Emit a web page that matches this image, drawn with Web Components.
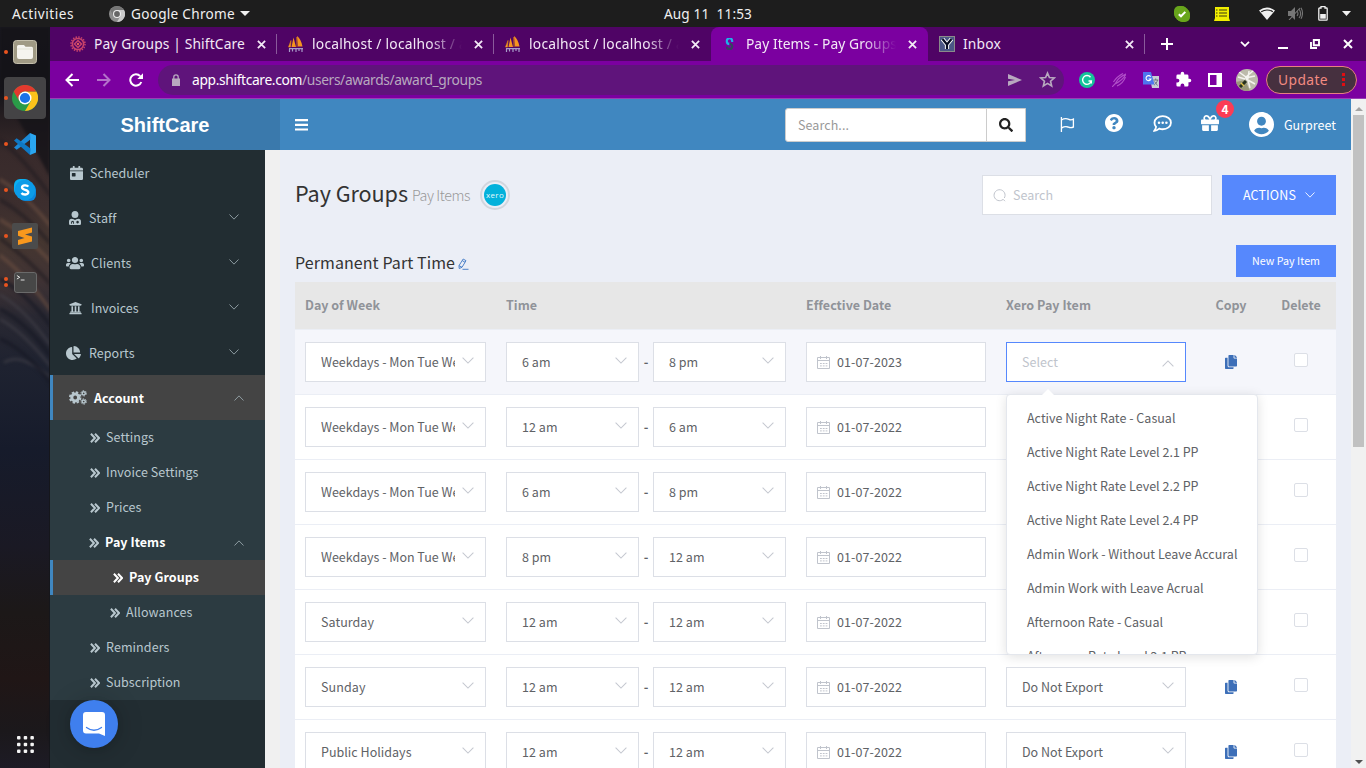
<!DOCTYPE html>
<html lang="en">
<head>
<meta charset="utf-8">
<title>Pay Items - Pay Groups</title>
<style>
html,body{margin:0;height:100%;overflow:hidden;background:#1d1d1d}
</style>
</head>
<body>
<desk-top></desk-top>
<script>
const RESET = '*{box-sizing:border-box}:host([hidden]){display:none}svg{display:block;flex:none}';
const UI = 'font-family:"Noto Sans",sans-serif;';
const PAGE = 'font-family:"Noto Sans CJK SC","Source Sans Pro",sans-serif;';

function define(name, css, html) {
  customElements.define(name, class extends HTMLElement {
    connectedCallback() {
      if (this.shadowRoot) return;
      const root = this.attachShadow({mode: 'open'});
      root.innerHTML = '<style>' + RESET + css + '</style>' + (typeof html === 'function' ? html(this) : html);
    }
  });
}

/* Text run whose tracking is adjusted so that it takes the width given by w. */
const runs = [];
customElements.define('fit-text', class extends HTMLElement {
  connectedCallback() {
    if (this.shadowRoot) return;
    this.attachShadow({mode: 'open'}).innerHTML =
      '<style>:host{display:inline-block;white-space:pre;flex:none}</style><slot></slot>';
    runs.push(this);
  }
  fit() {
    const w = +this.getAttribute('w'), n = this.textContent.length;
    if (!w) return;
    const nat = this.getBoundingClientRect().width;
    this.style.letterSpacing = ((w - nat) / n).toFixed(3) + 'px';
  }
});
const T = (s, w, cls = '') => `<fit-text w="${w}" class="${cls}">${s}</fit-text>`;

const ICONS = {
  search: ['0 0 512 512', '<path d="M505 442.7L405.3 343c-4.5-4.5-10.6-7-17-7H372c27.6-35.3 44-79.7 44-128C416 93.1 322.9 0 208 0S0 93.1 0 208s93.1 208 208 208c48.3 0 92.7-16.4 128-44v16.3c0 6.4 2.5 12.5 7 17l99.7 99.7c9.4 9.4 24.6 9.4 33.9 0l28.3-28.3c9.4-9.4 9.4-24.6.1-34zM208 336c-70.7 0-128-57.2-128-128 0-70.7 57.2-128 128-128 70.7 0 128 57.2 128 128 0 70.7-57.2 128-128 128z"/>'],
  copy: ['0 0 448 512', '<path d="M320 448v40c0 13.255-10.745 24-24 24H24c-13.255 0-24-10.745-24-24V120c0-13.255 10.745-24 24-24h72v296c0 30.879 25.121 56 56 56h168zm0-344V0H152c-13.255 0-24 10.745-24 24v368c0 13.255 10.745 24 24 24h272c13.255 0 24-10.745 24-24V128H344c-13.2 0-24-10.8-24-24zm120.971-31.029L375.029 7.029A24 24 0 0 0 358.059 0H352v96h96v-6.059a24 24 0 0 0-7.029-16.97z"/>'],
  calendar: ['0 0 448 512', '<path d="M0 464c0 26.5 21.5 48 48 48h352c26.5 0 48-21.5 48-48V192H0v272zm64-192c0-8.8 7.2-16 16-16h96c8.8 0 16 7.2 16 16v96c0 8.8-7.2 16-16 16H80c-8.8 0-16-7.2-16-16v-96zM400 64h-48V16c0-8.8-7.2-16-16-16h-32c-8.8 0-16 7.2-16 16v48H160V16c0-8.8-7.2-16-16-16h-32c-8.8 0-16 7.2-16 16v48H48C21.5 64 0 85.5 0 112v48h448v-48c0-26.5-21.5-48-48-48z"/>'],
  staff: ['0 0 14 16', '<circle cx="7" cy="4" r="4"/><path fill-rule="evenodd" d="M3.5 9h1.2L7 10.2 9.300 9h1.200A3.400 3.400 0 0 1 14 12.500v2q0 1.500-1.500 1.500h-11Q0 16 0 14.500v-2A3.400 3.400 0 0 1 3.500 9zM4 11.300a1.500 1.500 0 0 0-1.500 1.500v1.700h1v-1.400q0-.6.6-.6t.6.600v1.400h1v-1.700A1.500 1.500 0 0 0 4 11.300zM10 11.200a1.500 1.500 0 1 0 .01 0z"/>'],
  users: ['0 0 640 512', '<path d="M96 224c35.3 0 64-28.7 64-64s-28.7-64-64-64-64 28.7-64 64 28.7 64 64 64zm448 0c35.3 0 64-28.7 64-64s-28.7-64-64-64-64 28.7-64 64 28.7 64 64 64zm32 32h-64c-17.6 0-33.5 7.1-45.1 18.6 40.3 22.1 68.9 62 75.1 109.4h66c17.7 0 32-14.3 32-32v-32c0-35.3-28.7-64-64-64zm-256 0c61.9 0 112-50.1 112-112S381.9 32 320 32 208 82.1 208 144s50.1 112 112 112zm76.8 32h-8.3c-20.8 10-43.9 16-68.5 16s-47.6-6-68.5-16h-8.3C179.6 288 128 339.6 128 403.2V432c0 26.5 21.5 48 48 48h288c26.5 0 48-21.5 48-48v-28.8c0-63.6-51.6-115.2-115.2-115.2zm-223.7-13.4C161.5 263.1 145.6 256 128 256H64c-35.3 0-64 28.7-64 64v32c0 17.7 14.3 32 32 32h65.9c6.3-47.4 34.9-87.3 75.2-109.4z"/>'],
  bank: ['0 0 512 512', '<path d="M496 128v16a8 8 0 0 1-8 8h-24v12c0 6.627-5.373 12-12 12H60c-6.627 0-12-5.373-12-12v-12H24a8 8 0 0 1-8-8v-16a8 8 0 0 1 4.941-7.392l232-88a7.996 7.996 0 0 1 6.118 0l232 88A8 8 0 0 1 496 128zm-24 304H40c-13.255 0-24 10.745-24 24v16a8 8 0 0 0 8 8h464a8 8 0 0 0 8-8v-16c0-13.255-10.745-24-24-24zM96 192v192H60c-6.627 0-12 5.373-12 12v20h416v-20c0-6.627-5.373-12-12-12h-36V192h-64v192h-64V192h-64v192h-64V192H96z"/>'],
  pie: ['0 0 544 512', '<path d="M527.79 288H290.5l158.03 158.03c6.04 6.04 15.98 6.53 22.19.68 38.7-36.46 65.32-85.61 73.13-140.86 1.34-9.46-6.51-17.85-16.06-17.85zm-15.83-64.8C503.72 103.74 408.26 8.28 288.8.04 279.68-.59 272 7.1 272 16.24V240h223.77c9.14 0 16.82-7.68 16.19-16.8zM224 288V50.71c0-9.55-8.39-17.4-17.84-16.06C86.99 51.49-4.1 155.6.14 280.37 4.5 408.51 114.83 513.59 243.03 511.98c50.4-.63 96.97-16.87 135.26-44.03 7.9-5.6 8.42-17.23 1.57-24.08L224 288z"/>'],
  cogs: ['0 0 18 15', '<g fill="none" stroke="currentColor"><circle cx="6.200" cy="7.500" r="3.400" stroke-width="3"/><circle cx="6.200" cy="7.500" r="5.300" stroke-width="1.800" stroke-dasharray="2.400 1.763"/><circle cx="14.700" cy="3.300" r="1.600" stroke-width="1.500"/><circle cx="14.700" cy="3.300" r="2.700" stroke-width="1" stroke-dasharray="1.500 1.327"/><circle cx="14.700" cy="11.500" r="1.600" stroke-width="1.500"/><circle cx="14.700" cy="11.500" r="2.700" stroke-width="1" stroke-dasharray="1.500 1.327"/></g>'],
  help: ['8 8 496 496', '<path d="M504 256c0 136.997-111.043 248-248 248S8 392.997 8 256C8 119.083 119.043 8 256 8s248 111.083 248 248zM262.655 90c-54.497 0-89.255 22.957-116.549 63.758-3.536 5.286-2.353 12.415 2.715 16.258l34.699 26.31c5.205 3.947 12.621 3.008 16.665-2.122 17.864-22.658 30.113-35.797 57.303-35.797 20.429 0 45.698 13.148 45.698 32.958 0 14.976-12.363 22.667-32.534 33.976C247.128 238.528 216 254.941 216 296v4c0 6.627 5.373 12 12 12h56c6.627 0 12-5.373 12-12v-1.333c0-28.462 83.186-29.647 83.186-106.667 0-58.002-60.165-102-116.531-102zM256 338c-25.365 0-46 20.635-46 46 0 25.364 20.635 46 46 46s46-20.636 46-46c0-25.365-20.635-46-46-46z"/>'],
  user: ['0 8 496 496', '<path d="M248 8C111 8 0 119 0 256s111 248 248 248 248-111 248-248S385 8 248 8zm0 96c48.6 0 88 39.4 88 88s-39.4 88-88 88-88-39.4-88-88 39.400-88 88-88zm0 344c-58.7 0-111.300-26.600-146.500-68.200 18.800-35.400 55.600-59.800 98.500-59.800 2.400 0 4.800.4 7.100 1.100 13 4.200 26.600 6.900 40.900 6.900 14.300 0 28-2.700 40.900-6.900 2.300-.7 4.700-1.100 7.100-1.100 42.900 0 79.700 24.400 98.500 59.800C359.300 421.400 306.700 448 248 448z"/>'],
  gift: ['0 32 512 448', '<path d="M32 448c0 17.7 14.300 32 32 32h160V320H32v128zm256 32h160c17.7 0 32-14.300 32-32V320H288v160zm192-320h-42.100c6.200-12.100 10.100-25.500 10.100-40 0-48.500-39.500-88-88-88-41.600 0-68.500 21.300-103 68.300-34.500-47-61.400-68.300-103-68.300-48.500 0-88 39.500-88 88 0 14.500 3.800 27.900 10.100 40H32c-17.700 0-32 14.300-32 32v80c0 8.800 7.200 16 16 16h480c8.800 0 16-7.200 16-16v-80c0-17.700-14.300-32-32-32zm-326.100 0c-22.100 0-40-17.900-40-40s17.900-40 40-40c19.900 0 34.600 3.300 86.100 80h-86.100zm206.100 0h-86.100c51.400-76.500 65.700-80 86.100-80 22.100 0 40 17.900 40 40s-17.900 40-40 40z"/>'],
  flag: ['0 0 16 15', '<g fill="none" stroke="currentColor" stroke-width="1.400"><path d="M1.500 0v15"/><path d="M1.500 3C5 1 7.500 1.500 9.500 2.400S13 2.800 14.300 2.200V10C11.500 11.200 10 10.500 8.500 10S4.500 9.500 1.500 11"/></g>'],
  chat: ['0 0 18 16', '<path d="M9.200 1C13.500 1 17 3.700 17 7.200s-3.500 6.200-7.800 6.200c-1.200 0-2.300-.2-3.300-.6C4.700 13.900 3 14.900 1.200 14.900 2 14 2.700 12.900 2.900 11.200 2 10.100 1.400 8.700 1.400 7.200 1.400 3.700 4.900 1 9.200 1z" fill="none" stroke="currentColor" stroke-width="1.700"/><circle cx="5.700" cy="7.200" r="1.200"/><circle cx="9.200" cy="7.200" r="1.200"/><circle cx="12.700" cy="7.200" r="1.200"/>'],
  bars: ['0 0 13 12', '<path d="M0 0h13v2.200H0zM0 4.700h13v2.200H0zM0 9.400h13v2.200H0z"/>'],
  dbl: ['0 0 10 10', '<path d="M.9.800l4 4.200-4 4.200M5 .8L9 5 5 9.200" fill="none" stroke="currentColor" stroke-width="2"/>'],
  down: ['0 0 12 7', '<path d="M.6.600L6 6 11.400.600" fill="none" stroke="currentColor" stroke-width="1.050"/>'],
  up: ['0 0 12 7', '<path d="M.6 6.400L6 1l5.400 5.400" fill="none" stroke="currentColor" stroke-width="1.050"/>'],
  date: ['0 0 13 13', '<g fill="none" stroke="currentColor" stroke-width="1"><path d="M.5 1.500h12v11H.5zM.5 4.500h12M3.500 0v3M9.500 0v3" /><path d="M3 7.500h8M3 9.900h8" stroke-dasharray="1.800 1"/></g>'],
  lens: ['0 0 13 13', '<path d="M10 10.500A5.500 5.500 0 1 1 11.300 9M10 10.200l2 2" fill="none" stroke="currentColor" stroke-width="1"/>'],
  edit: ['0 0 11 12', '<path d="M1 7.600L5.200 1 8 2.700 4 9.300 1.200 10.500zM4.300 2.600l2.700 1.700M1 7.600l3 1.700M4.500 11.300h6" fill="none" stroke="currentColor" stroke-width=".9"/>'],
  x: ['0 0 10 10', '<path d="M1 1l8 8M9 1L1 9" fill="none" stroke="currentColor" stroke-width="2"/>'],
  plus: ['0 0 12 12', '<path d="M6 0v12M0 6h12" fill="none" stroke="currentColor" stroke-width="2"/>'],
  chev: ['0 0 10 6', '<path d="M1 .8l4 4 4-4" fill="none" stroke="currentColor" stroke-width="1.800"/>'],
  min: ['0 0 10 10', '<path d="M0 8h10v2H0z"/>'],
  restore: ['0 0 10 10', '<path d="M3.800 1h5.200v5.200H3.800z M1 3v6h6" fill="none" stroke="currentColor" stroke-width="1.900"/>'],
  back: ['0 0 14 14', '<path d="M14 7H2M7.500 1L1.500 7l6 6" fill="none" stroke="currentColor" stroke-width="2"/>'],
  fwd: ['0 0 14 14', '<path d="M0 7h12M6.500 1l6 6-6 6" fill="none" stroke="currentColor" stroke-width="2"/>'],
  reload: ['0 0 14 14', '<path d="M12.300 9A5.700 5.700 0 1 1 11.200 3.100" fill="none" stroke="currentColor" stroke-width="2"/><path d="M14 .3V6H8.300z"/>'],
  lock: ['0 0 8 12', '<path d="M0 4.500h8V12H0z"/><path d="M1.800 5V3a2.200 2.200 0 0 1 4.400 0v2" fill="none" stroke="currentColor" stroke-width="1.300"/>'],
  send: ['0 0 14 12', '<path d="M0 0l14 6-14 6V7.300L7 6 0 4.700z"/>'],
  star: ['0 0 24 24', '<path d="M12 3l2.700 6.300 6.800.6-5.200 4.500 1.600 6.700L12 17.500l-5.900 3.600 1.600-6.700-5.200-4.500 6.800-.6z" fill="none" stroke="currentColor" stroke-width="2.300"/>'],
  grammarly: ['0 0 16 16', '<circle cx="8" cy="8" r="8" fill="#15c39a"/><path d="M11.500 5.200A4.400 4.400 0 1 0 12.300 9H9.500M12.300 9v2.500" fill="none" stroke="#fff" stroke-width="1.400"/>'],
  feather: ['0 0 14 14', '<path d="M0 14L3 11C5 7 9 3 14 1 12 5 7 9 3 11M1.500 9C4 5 7 2.500 11 .500M5 13c4-1.500 7-5 8.500-9" fill="none" stroke="#b04fc8" stroke-width="1.200"/>'],
  translate: ['0 0 16 16', '<path d="M6.500 4H16v12H9z" fill="#c9cdd6"/><path d="M0 0h8l3.500 12.500H0z" fill="#4e76ee"/><path d="M7.600 4.700A2.500 2.500 0 1 0 7.900 7H5.600" fill="none" stroke="#fff" stroke-width="1.100"/><path d="M10.300 8h5M12.700 6.500V8M14.500 8c-.5 2.500-2 4-3.300 5M11.500 9.500l3 4" fill="none" stroke="#67727c" stroke-width=".9"/>'],
  puzzle: ['0 0 24 24', '<path d="M20.500 11H19V7a2 2 0 0 0-2-2h-4V3.500a2.500 2.500 0 0 0-5 0V5H4a2 2 0 0 0-2 2v3.800h1.500a2.700 2.700 0 0 1 0 5.400H2V20a2 2 0 0 0 2 2h3.800v-1.500a2.700 2.700 0 0 1 5.400 0V22H17a2 2 0 0 0 2-2v-4h1.500a2.500 2.500 0 0 0 0-5z"/>'],
  panel: ['0 0 14 14', '<path fill-rule="evenodd" d="M0 0h14v14H0zM2 2v10h6.500V2z"/>'],
  avatar: ['0 0 22 22', '<clipPath id="c"><circle cx="11" cy="11" r="11"/></clipPath><g clip-path="url(#c)"><path fill="#bdbbab" d="M0 0h22v22H0z"/><path d="M0 13l9-2 5 11H0z" fill="#9a987a"/><path d="M3 3l7 5 8-7M9 9l10-2M10 10l9 5M13 2l-1 8M12 11l2 8M2 8l7 2" fill="none" stroke="#f4f3ee" stroke-width="1.500"/><path d="M4 18l6-6" stroke="#25301c" stroke-width="3"/><path d="M5 14l3 3" stroke="#e3c348" stroke-width="1.400"/></g>'],
  caret: ['0 0 10 5', '<path d="M0 0h10L5 5z"/>'],
  chromegrey: ['0 0 16 16', '<circle cx="8" cy="8" r="8" fill="#8d8d8d"/><path d="M8 4h7A8 8 0 0 1 8 16l3.500-6z" fill="#c9c9c9"/><path d="M1.300 4A8 8 0 0 1 15 4H8L4.500 10z" fill="#767676"/><circle cx="8" cy="8" r="4" fill="#eee"/><circle cx="8" cy="8" r="2.900" fill="#666"/>'],
  skypeok: ['0 0 16 16', '<rect width="13" height="13" rx="5" fill="#68a51c"/><rect x="3" y="3" width="13" height="13" rx="5" fill="#68a51c"/><circle cx="8" cy="8" r="7.400" fill="#68a51c"/><path d="M4.800 8.200L7 10.300l4.300-4.400" fill="none" stroke="#fff" stroke-width="2"/>'],
  note: ['0 0 16 14', '<path d="M1 0h14v11l1 3H0l1-3z" fill="#f1ee00"/><path d="M2 3h1.500M5 3h8M2 6h1.500M5 6h8M2 9h1.500M5 9h8" stroke="#77760b" stroke-width="1.400"/>'],
  wifi: ['0 0 16 13', '<path d="M0 3.500Q8-2.500 16 3.500L8 13z"/><path d="M2.200 4.700Q8 1.200 13.800 4.700" fill="none" stroke="#1d1d1d" stroke-width="1.100"/>'],
  mute: ['0 0 15 13', '<path d="M0 4h3l4-4v13L3 9H0z" fill="#777"/><path d="M9 4q2 2.500 0 5M11 2q3.300 4.500 0 9M13 .8q3 5.500 0 11M1 13L12 1" fill="none" stroke="#777" stroke-width="1.100"/>'],
  battery: ['0 0 10 15', '<path d="M.8 2.800Q.8 2 1.500 2H3V.7h4V2h1.500q.7 0 .7.800v10.500q0 .9-.7.9h-7q-.7 0-.7-.9z" fill="none" stroke="currentColor" stroke-width="1.300"/><path d="M2.200 8h5.600v4.700H2.200z"/>'],
  tabpay: ['0 0 16 16', '<g fill="none" stroke="#c9436b" stroke-width="1.500"><circle cx="8" cy="8" r="7" stroke-dasharray="1.500 1.250"/><circle cx="8" cy="8" r="5.600"/><path d="M8 4.500L11.500 8 8 11.500 4.500 8z"/></g><circle cx="8" cy="8" r="1.200" fill="#e15d5d"/>'],
  pma: ['0 0 16 16', '<path d="M5.500 1.500L3.500 11H8zM9 0q4 3 5.500 10.500H9.800z" fill="#f5941f"/><path d="M3 4.500L.5 11h2zM8.600 1L9 11" fill="#ffb347" stroke="#d9780f" stroke-width=".7"/><path d="M1 12.600h14M1.500 16v-3.500M4.500 15.500v-3M8 16v-3M11 15v-3M14 16v-3" stroke="#a79cc8" stroke-width="1.200"/>'],
  shift: ['0 0 10 12', '<path d="M8 4V3A2.500 2.500 0 0 0 2 3.300Q2 6 5 6" fill="none" stroke="#1eb3e8" stroke-width="2.400"/><path d="M5 6Q8 6 8 8.600 8 11 5 11 2 11 2 8.500" fill="none" stroke="#34435f" stroke-width="2.400"/>'],
  files: ['0 0 24 24', '<rect x=".5" y=".5" width="23" height="23" rx="3" fill="#a09a85" stroke="#c4bfac"/><path d="M4 6.500Q4 5 5.500 5H11l1.500 1.800h6Q20 6.800 20 8.300V17q0 2-2 2H6q-2 0-2-2z" fill="#f5f4ef"/><path d="M4 9h16" stroke="#dddacb" stroke-width=".7"/>'],
  chrome: ['0 0 26 26', '<circle cx="13" cy="13" r="13" fill="#2a9b48"/><path d="M13 6.500h11.300A13 13 0 0 1 13 26l5.700-9.700z" fill="#fcc21b"/><path d="M1.700 6.500A13 13 0 0 1 24.300 6.500H13a6.500 6.500 0 0 0-5.700 9.700z" fill="#e23a2e"/><circle cx="13" cy="13" r="6.500" fill="#fff"/><circle cx="13" cy="13" r="5.100" fill="#1a73e8"/>'],
  vscode: ['0 0 24 24', '<path d="M17 1l6 2.600v16.800L17 23z" fill="#2aa6f0"/><path d="M17 1L1 15.500l2.700 2.300L17.500 7.500z" fill="#1b8ad8"/><path d="M17 23L1 8.500l2.700-2.300L17.500 16.500z" fill="#0f78c4"/>'],
  skype: ['0 0 22 22', '<rect width="17" height="17" rx="6" fill="#0ab0f2"/><rect x="5" y="5" width="17" height="17" rx="6" fill="#0b86dc"/><circle cx="11" cy="11" r="10.300" fill="#0c9be8"/><path d="M14.300 7.700C13 5.700 8 5.900 8 8.600c0 3 6.300 1.600 6.300 4.700 0 2.700-5.300 2.900-6.800.7" fill="none" stroke="#fff" stroke-width="2.300"/>'],
  sublime: ['0 0 26 26', '<rect width="26" height="26" rx="2" fill="#4b4b4b"/><path d="M20 4.500v5l-7 2 7 2v5L6 22v-5l6.500-2L6 12.700V8z" fill="#f9981d"/>'],
  term: ['0 0 24 21', '<rect x=".5" y=".5" width="23" height="20" rx="2.500" fill="#474747" stroke="#6c6c6c"/><path d="M3 3.500l3 1.800-3 1.700M7 8h4" fill="none" stroke="#e5e5e5"/>'],
  grid: ['0 0 17 17', '<g fill="#f4f4f4">' + [0, 6.700, 13.400].map(y => [0, 6.700, 13.400].map(x => `<rect x="${x}" y="${y}" width="3.500" height="3.500" rx="1"/>`).join('')).join('') + '</g>'],
  intercom: ['0 0 22 24', '<path d="M3 0h16q3 0 3 3v21l-6-2.500H3q-3 0-3-3V3q0-3 3-3z" fill="#fff"/><path d="M3.500 15.500q7.500 5.500 15 0" fill="none" stroke="#3f7fee" stroke-width="1.300" stroke-linecap="round"/>'],
};
customElements.define('ui-icon', class extends HTMLElement {
  connectedCallback() {
    if (this.shadowRoot) return;
    const [vb, body] = ICONS[this.getAttribute('n')];
    this.attachShadow({mode: 'open'}).innerHTML =
      `<style>:host{display:block;flex:none}svg{display:block;width:100%;height:100%}</style><svg viewBox="${vb}" fill="currentColor" preserveAspectRatio="none">${body}</svg>`;
  }
});
const I = (n, w, h, style = '') => `<ui-icon n="${n}" style="width:${w}px;height:${h}px;${style}"></ui-icon>`;

/* ---------- GNOME shell ---------- */
define('gnome-bar', `:host{display:grid;grid-template-columns:664px auto 1fr;height:27px;background:#1d1d1d;color:#f0f0f0;${UI}font-size:13.6px;line-height:27px}
  div{display:flex;align-items:center}.l{padding-left:12px}.r{justify-content:flex-end;padding-right:15px}`,
  `<div class="l">${T('Activities', 62)}${I('chromegrey', 16, 16, 'margin:0 6px 0 35px')}${T('Google Chrome', 104)}${I('caret', 10, 5, 'margin-left:5px')}</div>
   <div>${T('Aug 11  11:53', 88)}</div>
   <div class="r">${I('skypeok', 16, 16)}${I('note', 16, 14, 'margin-left:24px')}${I('wifi', 16, 13, 'margin-left:29px')}${I('mute', 15, 13, 'margin-left:13px')}${I('battery', 10, 15, 'margin-left:15px')}${I('caret', 9, 5, 'margin-left:14px')}</div>`);

define('dock-item', `:host{display:flex;position:relative;width:42px;height:42px;align-items:center;justify-content:center;border-radius:4px}
  :host([on]){background:#444345}
  i{position:absolute;left:0;top:19px;width:4px;height:4px;border-radius:2px;background:#e9541f}
  :host([two]) i{top:16px;box-shadow:0 6px #e9541f}`, '<i></i><slot></slot>');
define('gnome-dock', `:host{display:flex;position:relative;flex-direction:column;align-items:center;gap:4px;padding:4px 0 15px 1px;width:50px;overflow:hidden;
   background:linear-gradient(#1a1a21,#16151a 9%,#241d20 12%,#382a2b 17%,#3c2e2e 24%,#453630 29%,#403334 34%,#292832 39%,#1e2230 46%,#161b2b 57%,#1a1924 70%,#1c1818 79%,#201616 88%,#1b181b 95%,#1d1b25);border-right:1px solid #15161b}
   .g{margin-top:auto}.fur{position:absolute;left:0;top:0;z-index:-1;filter:blur(1.500px)}:host{z-index:0}`,
  `<svg class="fur" width="50" height="741" fill="none" stroke-linecap="round"><path d="M0 60L50 150V0H0z" fill="#141318" opacity=".8" stroke="none"/>
   <path d="M-5 150Q25 165 55 205M-5 190Q25 205 55 240M-5 225Q25 245 55 290" stroke="#6d5142" stroke-width="4" opacity=".55"/>
   <path d="M-5 170Q25 185 55 222M-5 208Q25 228 55 262M-5 110Q20 125 55 175" stroke="#211d22" stroke-width="4" opacity=".6"/>
   <path d="M-5 265Q25 280 55 325M-5 290Q20 300 55 345M5 335Q20 325 50 350" stroke="#45434c" stroke-width="3" opacity=".5"/>
   <path d="M-5 250Q25 262 55 305M-5 280Q25 292 55 335M-5 310Q25 320 55 362" stroke="#161823" stroke-width="4" opacity=".6"/></svg>
   <dock-item>${I('files', 24, 24)}</dock-item><dock-item on>${I('chrome', 26, 26)}</dock-item><dock-item>${I('vscode', 24, 24)}</dock-item>
   <dock-item>${I('skype', 22, 22)}</dock-item><dock-item>${I('sublime', 26, 26)}</dock-item><dock-item two>${I('term', 23, 21)}</dock-item>
   <div class="g">${I('grid', 17, 17)}</div>`);

/* ---------- Browser chrome ---------- */
define('chrome-tab', `:host{display:flex;align-items:center;width:217px;height:34px;padding:0 11px;position:relative;color:#f3e9f6}
  :host([first]){width:218px}
  :host([bar])::after{content:"";position:absolute;right:0;top:7px;width:1px;height:20px;background:#8a5a9b}
  :host([on]){background:#7b00a0;border-radius:8px 8px 0 0}
  .f{width:16px;display:flex;justify-content:center;margin-right:8px}
  .t{width:151px;overflow:hidden;white-space:pre;line-height:34px}
  .t[fade]{-webkit-mask-image:linear-gradient(90deg,#000 78%,transparent)}`,
  el => `<div class="f"><slot name="icon"></slot></div><div class="t" ${el.hasAttribute('fade') ? 'fade' : ''}><slot></slot></div>${I('x', 9, 9, 'margin-left:12px')}`);
define('chrome-tabs', `:host{display:flex;align-items:center;height:34px;padding-left:9px;background:#4f0465;color:#fff;${UI}font-size:13.8px}
  .w{display:flex;align-items:center;margin-left:auto;padding-right:13px}`,
  `<chrome-tab first bar>${I('tabpay', 16, 16).replace('<ui-icon', '<ui-icon slot="icon"')}${T('Pay Groups | ShiftCare', 151)}</chrome-tab>
   <chrome-tab fade bar>${I('pma', 16, 16).replace('<ui-icon', '<ui-icon slot="icon"')}${T('localhost / localhost / a', 155)}</chrome-tab>
   <chrome-tab fade>${I('pma', 16, 16).replace('<ui-icon', '<ui-icon slot="icon"')}${T('localhost / localhost / a', 155)}</chrome-tab>
   <chrome-tab on fade>${I('shift', 9, 12).replace('<ui-icon', '<ui-icon slot="icon"')}${T('Pay Items - Pay Groups', 151)}</chrome-tab>
   <chrome-tab bar><svg slot="icon" width="16" height="16" style="display:block"><rect x=".5" y=".5" width="15" height="15" fill="#4b5686" stroke="#8a8a8a"/><path d="M3.500 3L8 8.500V13M12.500 3L8 8.500" fill="none" stroke="#fff" stroke-width="4.200"/><path d="M3.500 3L8 8.500V13M12.500 3L8 8.500" fill="none" stroke="#080d25" stroke-width="2.200"/></svg>${T('Inbox', 38)}</chrome-tab>
   ${I('plus', 12, 12, 'margin-left:16px')}
   <div class="w">${I('chev', 10, 6)}${I('min', 10, 10, 'margin-left:28px')}${I('restore', 10, 10, 'margin-left:22px')}${I('x', 10, 10, 'margin-left:23px')}</div>`);
define('chrome-bar', `:host{display:flex;align-items:center;height:38px;padding:0 9px 0 15px;background:#7b00a0;border-bottom:1px solid #9a3fb4;color:#fff;${UI}font-size:13.8px}
  .o{display:flex;align-items:center;height:30px;width:906px;margin-left:15px;border-radius:15px;background:#5f147b;padding:0 8px 0 14px;color:#b8a9bf}
  .o b{font-weight:400;color:#fff}.s{margin-left:auto;display:flex;gap:17px;align-items:center}
  .e{display:flex;align-items:center;gap:16px;margin-left:15px}
  .u{display:flex;align-items:center;justify-content:space-between;width:91px;height:28px;margin-left:auto;border:1px solid #e88080;border-radius:14px;background:#46303f;color:#f28b82;padding:0 11px}
  .k{width:3px;height:3px;background:#e00d12;box-shadow:0 5px #e00d12,0 -5px #e00d12}`,
  `${I('back', 14, 14)}${I('fwd', 14, 14, 'margin-left:18px;color:#b472ca')}${I('reload', 14, 14, 'margin-left:18px')}
   <div class="o">${I('lock', 8, 12)}<span style="margin-left:12px">${'<b>' + T('app.shiftcare.com', 110) + '</b>' + T('/users/awards/award_groups', 180)}</span>
   <div class="s">${I('send', 14, 12)}${I('star', 17, 17)}</div></div>
   <div class="e">${I('grammarly', 16, 16)}${I('feather', 14, 14, 'margin:0 1px')}${I('translate', 16, 16)}${I('puzzle', 17, 17, 'margin:0 -1px 0 0')}${I('panel', 14, 14, 'margin-left:1px')}${I('avatar', 22, 22, 'margin-left:-2px')}</div>
   <div class="u">${T('Update', 50)}<span class="k"></span></div>`);

/* ---------- ShiftCare header and side menu ---------- */
define('care-header', `:host{display:flex;height:51px;background:#4087c0;color:#fff;${PAGE}font-size:12.500px}
  .logo{display:flex;align-items:center;justify-content:center;width:230px;background:#3a79ac;font:bold 20px/50px "Liberation Sans",sans-serif}
  .bar{flex:1;display:flex;align-items:center;padding:0 15px}
  .q{display:flex;width:241px;height:34px;margin:0 0 0 auto;border:1px solid #ccc;background:#fff;color:#999;border-radius:3px 0 0 3px}
  .q span{flex:1;padding-left:12px;line-height:32px}.q div{display:flex;align-items:center;justify-content:center;width:39px;border-left:1px solid #ccc;color:#222}
  .g{position:relative}.g em{position:absolute;left:15px;top:-15px;width:18px;height:18px;border-radius:9px;background:#fb3c55;font:bold 12px/18px "Noto Sans CJK SC",sans-serif;text-align:center}`,
  `<div class="logo">${T('ShiftCare', 89)}</div>
   <div class="bar">${I('bars', 13, 12)}
   <div class="q"><span>${T('Search...', 51)}</span><div>${I('search', 14, 14)}</div></div>
   ${I('flag', 15, 15, 'margin-left:34px')}${I('help', 18, 18, 'margin:-4px 0 0 30px')}${I('chat', 19, 17, 'margin:-3px 0 0 30px')}
   <div class="g" style="margin:-3px 0 0 29px">${I('gift', 18, 16)}<em>4</em></div>
   ${I('user', 25, 25, 'margin:0 10px 0 30px')}${T('Gurpreet', 52)}</div>`);

define('menu-item', `:host{display:flex;align-items:center;height:45px;color:#b8c7ce;border-left:3px solid transparent;padding-right:21px;position:relative}
  :host([sub]){height:35px}:host([sub]) span{margin-top:-2px}
  :host([on]){background:#444;border-left-color:#4087c0}
  :host([bold]){color:#fff;font-weight:700}
  .i{display:flex;color:#b8c7ce}:host([white]) .i{color:#fff}.c{margin-left:auto;color:#9aa8ae}`,
  el => {
    const a = n => el.getAttribute(n), [ic, x, w, h] = a('icon').split(' ');
    return `<div class="i" style="margin-left:${x - 53}px">${I(ic, w, h)}</div><span style="margin-left:${a('tx') - x - w}px">${T(a('label'), a('w'))}</span>
      ${a('arrow') ? `<div class="c" style="${a('arrow') === 'up' ? 'margin-right:0' : 'margin:-1px 5px 0 auto'}">${I(a('arrow'), 10, 6)}</div>` : ''}`;
  });
const M = (label, tx, w, icon, extra = '') => `<menu-item label="${label}" tx="${tx}" w="${w}" icon="${icon}" ${extra}></menu-item>`;
define('care-menu', `:host{display:block;width:215px;background:#222d32;${PAGE}font-size:12.500px;line-height:20px}
  .s{background:#2c3b41}`,
  M('Scheduler', 90, 59.5, 'calendar 70 13 14') + M('Staff', 89, 27.5, 'staff 69 12 14', 'arrow="down"') + M('Clients', 91, 40.500, 'users 66 18 14', 'arrow="down"')
  + M('Invoices', 91, 47.500, 'bank 69 13 14', 'arrow="down"') + M('Reports', 89, 45.500, 'pie 66 15 14', 'arrow="down"')
  + M('Account', 94, 50, 'cogs 69 18 15', 'arrow="up" on bold') + '<div class="s">'
  + M('Settings', 106, 48, 'dbl 90 10 10', 'sub') + M('Invoice Settings', 106, 92.500, 'dbl 90 10 10', 'sub') + M('Prices', 106, 35.500, 'dbl 90 10 10', 'sub')
  + M('Pay Items', 105, 60.500, 'dbl 89 10 10', 'sub bold arrow="up"') + M('Pay Groups', 129, 70, 'dbl 113 10 10', 'sub bold on white')
  + M('Allowances', 126, 66.500, 'dbl 110 10 10', 'sub') + M('Reminders', 106, 63.500, 'dbl 90 10 10', 'sub') + M('Subscription', 106, 74.500, 'dbl 90 10 10', 'sub') + '</div>');

/* ---------- Form controls ---------- */
define('select-box', `:host{display:flex;align-items:center;height:40px;border:1px solid #dcdfe6;background:#fff;padding:0 11px 0 15px;color:#606266}
  :host([open]){border-color:#5688fd;color:#c0c4cc}
  div{flex:1;overflow:hidden;white-space:pre;margin-right:7px}.i{flex:none;margin:-3px 0 0;color:#c5c8d0;overflow:visible}:host([open]) .i{margin-top:2px}`,
  el => `<div><slot></slot></div><div class="i">${I(el.hasAttribute('open') ? 'up' : 'down', 12, 7)}</div>`);
define('date-box', `:host{display:flex;align-items:center;height:40px;border:1px solid #dcdfe6;background:#fff;padding-left:10px;gap:7px;color:#606266}`,
  `${I('date', 13, 13, 'color:#c0c4cc')}<slot></slot>`);
const HOURS = {'6 am': 28.500, '8 pm': 29, '12 am': 35.500};
define('pay-row', `:host{display:grid;grid-template-columns:201px 300px 200px 200px 70px 70px;height:65px;border-bottom:1px solid #ebeef5;background:#fff;align-items:center}
  :host([on]){background:#f5f6fb}
  .c{padding:0 10px}.t{display:grid;grid-template-columns:133px 14px 133px;align-items:center;text-align:center;color:#606266}
  .t span{font-weight:700}.k{display:flex;justify-content:center;color:#3d6fb8}.t select-box{text-align:left}
  i{display:block;width:14px;height:14px;border:1px solid #dcdfe6;border-radius:2px;background:#fff;margin-top:-4px}`,
  el => {
    const [day, dw, from, to, year, item] = el.getAttribute('data').split('|');
    return `<div class="c"><select-box>${T(day, dw)}</select-box></div>
      <div class="c t"><select-box>${T(from, HOURS[from])}</select-box><span>-</span><select-box>${T(to, HOURS[to])}</select-box></div>
      <div class="c"><date-box>${T('01-07-' + year, 65)}</date-box></div>
      <div class="c">${item === 'Select' ? `<select-box open>${T('Select', 36)}</select-box>` : `<select-box>${item ? T(item, 81) : ''}</select-box>`}</div>
      <div class="k">${I('copy', 12, 14)}</div><div class="k"><i></i></div>`;
  });
define('pay-table', `:host{display:block;width:1041px}
  .h{display:grid;grid-template-columns:201px 300px 200px 200px 70px 70px;height:48px;background:#e7e7e7;border-bottom:1px solid #ebeef5;line-height:45px;color:#909399;font-weight:700}
  .h div{padding-left:10px}.h .c{padding:0;text-align:center}`,
  `<div class="h"><div>${T('Day of Week', 75)}</div><div>${T('Time', 31)}</div><div>${T('Effective Date', 85)}</div><div>${T('Xero Pay Item', 85)}</div><div class="c">${T('Copy', 31)}</div><div class="c">${T('Delete', 39.500)}</div></div>`
  + ['Weekdays - Mon Tue Wed|146|6 am|8 pm|2023|Select', 'Weekdays - Mon Tue Wed|146|12 am|6 am|2022|', 'Weekdays - Mon Tue Wed|146|6 am|8 pm|2022|',
     'Weekdays - Mon Tue Wed|146|8 pm|12 am|2022|', 'Saturday|53|12 am|12 am|2022|', 'Sunday|44.500|12 am|12 am|2022|Do Not Export', 'Public Holidays|90.500|12 am|12 am|2022|Do Not Export']
    .map((d, i) => `<pay-row data="${d}" ${i ? '' : 'on'}></pay-row>`).join(''));
define('option-list', `:host{position:absolute;left:726px;top:244px;width:252px;height:261px;border:1px solid #e4e7ed;border-radius:4px;background:#fff;box-shadow:0 2px 12px rgba(0,0,0,.12);color:#606266}
  .a{position:absolute;left:35px;top:-6px;width:0;border:6px solid transparent;border-top:0;border-bottom-color:#fff}
  .l{height:259px;overflow:hidden;padding-top:6px}.l div{height:34px;line-height:34px;padding-left:20px}`,
  `<span class="a"></span><div class="l">` + [['Active Night Rate - Casual', 148.500], ['Active Night Rate Level 2.1 PP', 171.500], ['Active Night Rate Level 2.2 PP', 171.500], ['Active Night Rate Level 2.4 PP', 171.500],
  ['Admin Work - Without Leave Accural', 210.500], ['Admin Work with Leave Acrual', 176.500], ['Afternoon Rate - Casual', 136], ['Afternoon Rate Level 2.1 PP', 159.500]].map(([s, w]) => `<div>${T(s, w)}</div>`).join('') + '</div>');

define('xero-badge', `:host{display:flex;width:30px;height:30px;border:2px solid #d2d6de;border-radius:15px;align-items:center;justify-content:center}
  div{width:22px;height:22px;border-radius:11px;background:#03b1db;color:#e8f8fc;font:8px/21px "Open Sans",sans-serif;text-align:center}`, `<div>${T('xero', 18)}</div>`);
define('care-content', `:host{display:block;position:relative;flex:1;height:618px;overflow:hidden;padding:25px 15px 0;background:#ebeef6;${PAGE}font-size:12.500px;line-height:20px}
  .t{display:flex;align-items:center;height:40px;color:#333}
  h1{margin:-4px 4px 0 0;font-size:21.600px;font-weight:400}small{font-size:14.300px;font-weight:300;color:#999;margin:0 10px 0 0}
  .q{display:flex;align-items:center;width:230px;height:40px;margin:0 10px 0 auto;padding-left:10px;gap:7px;border:1px solid #dcdfe6;background:#fff;color:#c0c4cc}
  .b{display:flex;align-items:center;justify-content:center;background:#5688fd;color:#fff}
  .s{display:flex;align-items:center;height:32px;margin:30px 0 5px;color:#333;font-size:16px}.s>fit-text{margin-top:2px}`,
  `<div class="t"><h1>${T('Pay Groups', 113)}</h1><small>${T('Pay Items', 58)}</small><xero-badge></xero-badge>
     <div class="q">${I('lens', 13, 13)}${T('Search', 40)}</div><div class="b" style="width:114px;height:40px;gap:9px">${T('ACTIONS', 53)}${I('down', 10, 6)}</div></div>
   <div class="s">${T('Permanent Part Time', 160)}${I('edit', 11, 12, 'margin:5px 0 0 3px;color:#3d77c4')}<div class="b" style="width:100px;height:32px;margin-left:auto;font-size:10.700px">${T('New Pay Item', 68)}</div></div>
   <pay-table></pay-table><option-list></option-list>`);

define('page-scroll', `:host{display:flex;flex-direction:column;align-items:center;width:15px;background:#f1f1f1;padding:8px 0 4px}
  .a{border:4px solid transparent;border-top:0;border-bottom:4px solid #a3a3a3}.b{width:11px;height:332px;margin-top:4px;background:#c1c1c1}
  .c{margin-top:auto;border:4px solid transparent;border-bottom:0;border-top:4px solid #505050}`, '<div class="a"></div><div class="b"></div><div class="c"></div>');
define('care-app', `:host{display:flex;flex:1;min-height:0;position:relative}.m{flex:1;min-width:0}.r{display:flex;height:618px}.g{width:15px;background:#f0f0f0}
  .chat{position:absolute;left:20px;top:601px;width:48px;height:48px;border-radius:24px;background:#3f7fee;display:flex;align-items:center;justify-content:center;box-shadow:0 1px 6px rgba(0,0,0,.1),0 2px 28px rgba(0,0,0,.2)}`,
  `<div class="m"><care-header></care-header><div class="r"><care-menu></care-menu><div class="g"></div><care-content></care-content></div></div><page-scroll></page-scroll>
   <div class="chat">${I('intercom', 22, 24)}</div>`);

define('desk-top', `:host{display:flex;flex-direction:column;width:1366px;height:768px;overflow:hidden}.d{display:flex;flex:1;min-height:0}.w{flex:1;min-width:0;display:flex;flex-direction:column}`,
  `<gnome-bar></gnome-bar><div class="d"><gnome-dock></gnome-dock><div class="w"><chrome-tabs></chrome-tabs><chrome-bar></chrome-bar><care-app></care-app></div></div>`);

runs.forEach(r => r.fit());
</script>
</body>
</html>
